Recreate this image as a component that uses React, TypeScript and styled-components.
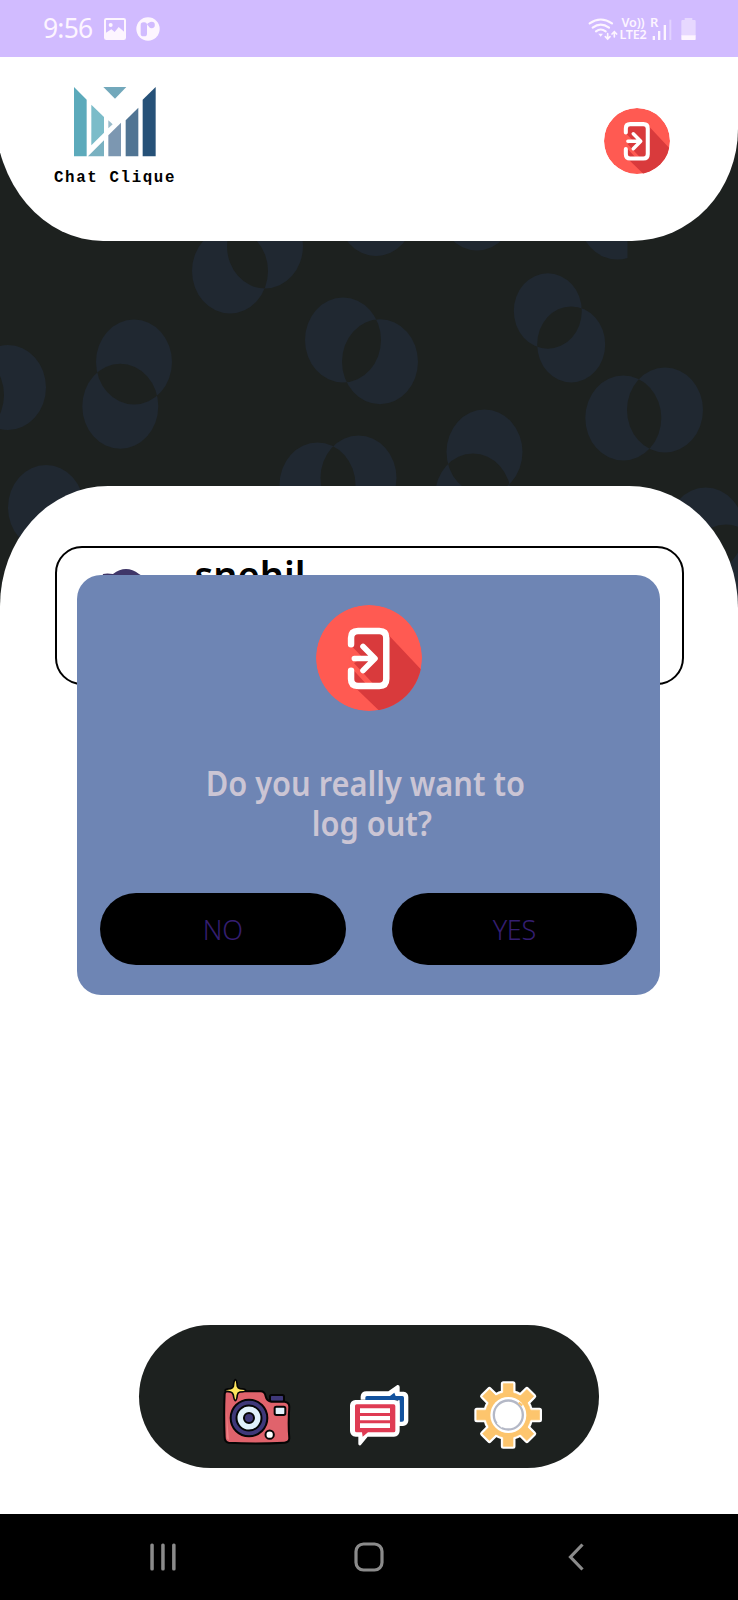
import React from "react";
import styled, { createGlobalStyle } from "styled-components";

const GlobalStyle = createGlobalStyle`
  *, *::before, *::after { box-sizing: border-box; }
  body { margin: 0; background: #fff; font-family: "Noto Sans", "Open Sans", sans-serif; }
  svg { display: block; flex: none; }
`;

const Screen = styled.div`
  position: relative;
  display: flex;
  flex-direction: column;
  width: 738px;
  height: 1600px;
  overflow: hidden;
`;

/* ---------- status bar ---------- */

const StatusBar = styled.div`
  display: flex;
  align-items: center;
  justify-content: space-between;
  height: 57px;
  padding: 0 42px 0 43px;
  background: #d1bbff;
  color: #fdf5ff;
`;

const StatusGroup = styled.div`
  display: flex;
  align-items: center;
`;

const Clock = styled.span`
  width: 61px;
  font-size: 26.5px;
  line-height: 57px;
  letter-spacing: -0.8px;
  font-weight: 400;
`;

const NetworkLabel = styled.div`
  display: flex;
  flex-direction: column;
  align-items: center;
  width: 30px;
  margin: 0 4px 0 0.5px;
  font-size: 12.6px;
  font-weight: 600;
  line-height: 11.5px;
  letter-spacing: -0.2px;
  white-space: nowrap;
`;

const Signal = styled.div`
  position: relative;
  margin-right: 9px;
`;

const Roaming = styled.span`
  position: absolute;
  left: -2px;
  top: -1px;
  font-size: 13px;
  font-weight: 600;
  line-height: 13px;
`;

/* ---------- main area ---------- */

const Main = styled.main`
  position: relative;
  display: flex;
  flex-direction: column;
  height: 1457px;
  background: #1d211f;
`;

const Backdrop = styled.svg`
  position: absolute;
  left: 0;
  top: 0;
`;

const Header = styled.header`
  position: relative;
  display: flex;
  justify-content: space-between;
  height: 184px;
  margin-left: -5px;
  padding: 30px 68px 0 58px;
  background: #fff;
  border-radius: 0 0 106px 108px / 0 0 112px 127px;
`;

const Brand = styled.div`
  display: flex;
  flex-direction: column;
  align-items: center;
  width: 123px;
`;

const BrandName = styled.span`
  margin-top: 11px;
  padding-left: 1px;
  font: 700 15.8px/20px "Liberation Mono", monospace;
  letter-spacing: 1.62px;
  color: #000;
  white-space: nowrap;
`;

const LogoutButton = styled.button`
  width: 66px;
  height: 66px;
  margin-top: 21px;
  padding: 0;
  border: 0;
  background: none;
`;

const Panel = styled.section`
  position: relative;
  display: flex;
  flex-direction: column;
  align-items: center;
  flex: 1;
  margin-top: 245px;
  padding: 60px 0 46px;
  background: #fff;
  border-radius: 108px 109px 0 0 / 120px 122px 0 0;
`;

const ContactCard = styled.div`
  display: flex;
  width: 629px;
  height: 139px;
  padding: 6px 0 0 41px;
  border: 2px solid #000;
  border-radius: 27px;
`;

const ContactName = styled.span`
  margin-left: 21px;
  font-size: 38px;
  font-weight: 600;
  line-height: 40px;
  color: #000;
`;

const Dock = styled.nav`
  display: flex;
  width: 460px;
  height: 143px;
  margin: auto 0 0;
  padding: 52px 0 0 82px;
  background: #1d211f;
  border-radius: 72px;
`;

const DockItem = styled.div<{ $before?: number }>`
  margin-left: ${(p) => p.$before ?? 0}px;
`;

/* ---------- dialog ---------- */

const Dialog = styled.div`
  position: absolute;
  left: 77px;
  top: 575px;
  display: flex;
  flex-direction: column;
  align-items: center;
  width: 583px;
  height: 420px;
  padding: 30px 23px 30px;
  background: #6e85b4;
  border-radius: 24px;
`;

const Question = styled.p`
  margin: 52px 0 0;
  font-size: 34px;
  font-weight: 600;
  line-height: 40px;
  text-align: center;
  color: #cbc5d4;
  white-space: nowrap;
`;

const Line = styled.span<{ $shift: number }>`
  display: block;
  margin-left: ${(p) => p.$shift}px;
  transform: scaleX(0.905);
`;

const Actions = styled.div`
  display: flex;
  gap: 46px;
  width: 100%;
  margin-top: auto;
`;

const ActionButton = styled.button`
  flex: 1;
  height: 72px;
  padding: 1px 0 0;
  border: 0;
  border-radius: 36px;
  background: #000;
  color: #341e70;
  font: 300 27px/36px "Noto Sans", sans-serif;
  letter-spacing: -0.3px;
`;

/* ---------- system navigation ---------- */

const SystemNav = styled.div`
  display: flex;
  align-items: center;
  justify-content: space-between;
  height: 86px;
  padding: 0 154px 0 150px;
  background: #000;
`;

const pairs: number[][] = [
  [8, 387.5, -34, 395],
  [134, 362, 120.3, 406.3],
  [230, 271, 265, 246],
  [343, 340, 380, 361.7],
  [317.5, 485, 358.5, 478],
  [484.5, 452, 473, 496],
  [623.3, 418, 665, 410],
  [705.7, 530, 726, 567],
];
const singles: number[][] = [
  [46, 507.5],
  [376, 213.5],
  [477, 208],
];

const oval = (cx: number, cy: number, rx = 38, ry = 42.5) =>
  `M${cx - rx} ${cy}a${rx} ${ry} 0 1 0 ${rx * 2} 0a${rx} ${ry} 0 1 0 ${-rx * 2} 0z`;

const OvalPattern = () => (
  <Backdrop width="738" height="600" viewBox="0 57 738 600">
    <g fill="#202831" fillRule="evenodd">
      {pairs.map(([a, b, c, d]) => (
        <path key={`${a}-${b}`} d={oval(a, b) + oval(c, d)} />
      ))}
      {singles.map(([a, b]) => (
        <path key={`${a}-${b}`} d={oval(a, b)} />
      ))}
      <path d={oval(547.8, 311, 34, 37.7) + oval(571.2, 344.4, 34, 38)} />
      <path d="M579 217a38 42.500 0 0 0 38 42.500q6 0 10.500-1.500V217z" />
    </g>
  </Backdrop>
);

const LogoutIcon = ({ size }: { size: number }) => (
  <svg width={size} height={size} viewBox="826.500 223 319 319">
    <clipPath id={`disc${size}`}>
      <circle cx="986" cy="382.500" r="159.500" />
    </clipPath>
    <g clipPath={`url(#disc${size})`}>
      <circle cx="986" cy="382.500" r="159.500" fill="#ff5a52" />
      <path d="M1042 310 1150 425V640H1120L930 458 941 301z" fill="#d93a3c" />
      <path d="M930 343 966 380 941 398 998 459H976L941 421V458H925z" fill="#ff5a52" />
    </g>
    <g fill="none" stroke="#fff" strokeLinecap="round" strokeLinejoin="round">
      <path
        strokeWidth="19.500"
        d="M932 341V322Q932 301 953 301H1017Q1038 301 1038 322V446Q1038 467 1017 467H953Q932 467 932 446V421"
      />
      <path strokeWidth="17" d="M942 384H1000M968 348 1004 384 968 420" />
    </g>
  </svg>
);

const LogoMark = () => (
  <svg width="82" height="70" viewBox="220 260 246 210">
    <path d="M220 260 258 298V468H220z" fill="#5caabb" />
    <path d="M272 313 310 350V397L272 435z" fill="#7bbcc9" />
    <path d="M262 468 310 420V468z" fill="#79b1c1" />
    <path d="M308 260H377L343 295z" fill="#72a8bb" />
    <path d="M323 360 336 372 323 384z" fill="#9bbccb" />
    <path d="M323 405 361 367V468H323z" fill="#7c97b1" />
    <path d="M375 360 413 322V468H375z" fill="#507493" />
    <path d="M426 298 465 260V468H426z" fill="#265178" />
  </svg>
);

const PictureIcon = () => (
  <svg width="22" height="22" viewBox="0 0 66 66">
    <rect x="3" y="3" width="60" height="60" rx="4" fill="none" stroke="#fdf5ff" strokeWidth="6" />
    <path d="M5 45 22 34 32 42 44 27 62 43V62H5z" fill="#fdf5ff" />
    <circle cx="20" cy="21" r="6" fill="#fdf5ff" />
  </svg>
);

const BadgeSvg = styled.svg`
  margin-left: 9.5px;
`;

const AppBadgeIcon = () => (
  <BadgeSvg width="24" height="24" viewBox="0 0 72 72">
    <circle cx="36" cy="36" r="35" fill="#fdf5ff" />
    <rect x="14" y="16" width="19" height="42" rx="8" fill="#d1bbff" />
    <circle cx="47" cy="24" r="9.500" fill="#d1bbff" />
    <circle cx="39" cy="22" r="5" fill="#d1bbff" />
  </BadgeSvg>
);

const WifiIcon = () => (
  <svg width="30" height="24" viewBox="655 46 90 72">
    <g fill="none" stroke="#fdf5ff" strokeWidth="6.500" strokeLinecap="round">
      <path d="M660 65Q693 42 727 65" />
      <path d="M669 78Q693 60 718 78" />
      <path d="M679 89Q693 78 708 89" />
      <path strokeWidth="5" d="M714 96V112M707 105 714 112 721 105M734 106V90M727 97 734 90 741 97" />
    </g>
    <path d="M686 96H700L693 105z" fill="#fdf5ff" />
  </svg>
);

const SignalBars = () => (
  <svg width="20" height="24" viewBox="848 46 60 72" fill="#fdf5ff">
    <rect x="850" y="103" width="7" height="12" />
    <rect x="866" y="88" width="7" height="27" />
    <rect x="883" y="70" width="7" height="45" />
    <rect x="900" y="54" width="6" height="61" opacity=".4" />
  </svg>
);

const BatteryIcon = () => (
  <svg width="15" height="24" viewBox="934 46 45 72" fill="#fdf5ff">
    <path d="M935 58Q935 55 938 55H945V49H968V55H975Q978 55 978 58V102H935z" opacity=".5" />
    <path d="M935 101H978V113Q978 115 976 115H937Q935 115 935 113z" />
  </svg>
);

const AvatarSvg = styled.svg`
  margin-top: 15px;
`;

const Avatar = () => (
  <AvatarSvg width="76" height="90" viewBox="0 0 76 90">
    <path d="M5 5Q9 4 15 5Q28-5 41 5Q66 18 62 50H8Q-3 30 5 5z" fill="#3f3668" />
    <circle cx="35" cy="40" r="20" fill="#f2c5a4" />
  </AvatarSvg>
);

const CameraIcon = () => (
  <svg width="71.670" height="75" viewBox="365 200 215 225">
    <g stroke="#050505" strokeWidth="6" strokeLinejoin="round">
      <rect x="512" y="254" width="42" height="20" rx="5" fill="#3f3879" />
      <path
        d="M376 250Q377 243 386 243H484Q496 243 499 258Q502 272 516 274H556Q570 276 570 290Q566 340 570 384Q569 396 555 397Q465 402 388 397Q376 395 376 380Q373 310 376 250z"
        fill="#e0636c"
      />
      <circle cx="449" cy="323" r="55" fill="#3f3879" />
      <circle cx="449" cy="323" r="37.500" fill="#e1f2fc" />
      <circle cx="449" cy="323" r="15" fill="#3f3879" />
      <rect x="526" y="289" width="32" height="25" rx="5" fill="#e1f2fc" />
      <circle cx="511" cy="373" r="12.500" fill="#fff" />
      <path
        d="M408 208Q412 208 414 228Q416 234 422 235Q439 236 439 240Q438 244 422 245Q415 247 414 254Q412 271 408 271Q404 269 402 254Q400 247 394 245Q378 243 377 240Q378 236 394 235Q401 233 402 228Q404 209 408 208z"
        fill="#ffe65e"
        strokeWidth="5"
      />
    </g>
    <path d="M382 300V380Q383 388 389 389Q385 345 382 300z" fill="#f08186" />
  </svg>
);

const ChatIcon = () => (
  <svg width="60.670" height="75" viewBox="750 200 182 225">
    <path
      d="M785 268V258Q787 243 802 243H868L895 224Q902 223 902 230V244H914Q928 246 928 260V332Q926 346 912 347H896V268z"
      fill="#fff"
    />
    <path d="M799 270V262Q799 257 804 257H873L886 247 890 257H910Q915 257 915 262V328Q915 334 909 334H902V270z" fill="#12529e" />
    <path
      d="M769 269H886Q902 270 902 286V362Q901 378 885 379H806L785 405Q778 407 778 400V379H770Q754 378 753 362V285Q755 270 769 269z"
      fill="#fff"
    />
    <path d="M773 282H884Q889 282 889 287V361Q889 366 884 366H807L791 379 789 366H773Q768 366 768 361V287Q768 282 773 282z" fill="#df3b53" />
    <path d="M783 294H873V308H783zM783 317H873V330H783zM783 339H873V353H783z" fill="#fff" />
  </svg>
);

const angles = [0, 45, 90, 135, 180, 225, 270, 315];

const GearShape = () => (
  <>
    <circle cx="1227.500" cy="314" r="68" />
    {angles.map((a) => (
      <path key={a} d="M1209 255 1213 246V220H1242V246L1246 255z" transform={`rotate(${a} 1227.500 314)`} />
    ))}
  </>
);

const GearIcon = () => (
  <svg width="70.670" height="75" viewBox="1122 200 212 225">
    <g fill="#fff" stroke="#fff" strokeWidth="15" strokeLinejoin="round">
      <GearShape />
    </g>
    <g fill="#fdc56d" stroke="#fdc56d" strokeWidth="2" strokeLinejoin="round">
      <GearShape />
    </g>
    <circle cx="1228" cy="314" r="54" fill="#fff" />
    <circle cx="1228" cy="314" r="43.500" fill="none" stroke="#b4b8c6" strokeWidth="7" />
    <path d="M1256 270 1266 281M1195 338 1210 351" stroke="#fff" strokeWidth="4" />
    <path d="M1259 277 1270 285" stroke="#fdc56d" strokeWidth="6" />
  </svg>
);

export default function App() {
  return (
    <Screen>
      <GlobalStyle />
      <StatusBar>
        <StatusGroup>
          <Clock>9:56</Clock>
          <PictureIcon />
          <AppBadgeIcon />
        </StatusGroup>
        <StatusGroup>
          <WifiIcon />
          <NetworkLabel>
            <span>Vo))</span>
            <span>LTE2</span>
          </NetworkLabel>
          <Signal>
            <Roaming>R</Roaming>
            <SignalBars />
          </Signal>
          <BatteryIcon />
        </StatusGroup>
      </StatusBar>

      <Main>
        <OvalPattern />
        <Header>
          <Brand>
            <LogoMark />
            <BrandName>Chat Clique</BrandName>
          </Brand>
          <LogoutButton aria-label="Log out">
            <LogoutIcon size={66} />
          </LogoutButton>
        </Header>
        <Panel>
          <ContactCard>
            <Avatar />
            <ContactName>snehil</ContactName>
          </ContactCard>
          <Dock>
            <DockItem>
              <CameraIcon />
            </DockItem>
            <DockItem $before={56.67}>
              <ChatIcon />
            </DockItem>
            <DockItem $before={63.33}>
              <GearIcon />
            </DockItem>
          </Dock>
        </Panel>
      </Main>

      <SystemNav>
        <svg width="26" height="28" viewBox="0 0 26 28" fill="#8b8b8b">
          <rect x="0.300" y="0.500" width="3.500" height="27" rx="1.500" />
          <rect x="11.200" y="0.500" width="3.500" height="27" rx="1.500" />
          <rect x="22.100" y="0.500" width="3.500" height="27" rx="1.500" />
        </svg>
        <svg width="30" height="30" viewBox="0 0 30 30">
          <rect x="2" y="2" width="26" height="26" rx="7.500" fill="none" stroke="#8b8b8b" strokeWidth="3.200" />
        </svg>
        <svg width="22" height="28" viewBox="-6 0 22 28">
          <path d="M14.500 1.500 2.500 14 14.500 26.500" fill="none" stroke="#8b8b8b" strokeWidth="3.200" />
        </svg>
      </SystemNav>

      <Dialog role="dialog">
        <LogoutIcon size={106} />
        <Question>
          <Line $shift={-6}>Do you really want to</Line>
          <Line $shift={7}>log out?</Line>
        </Question>
        <Actions>
          <ActionButton>NO</ActionButton>
          <ActionButton>YES</ActionButton>
        </Actions>
      </Dialog>
    </Screen>
  );
}
